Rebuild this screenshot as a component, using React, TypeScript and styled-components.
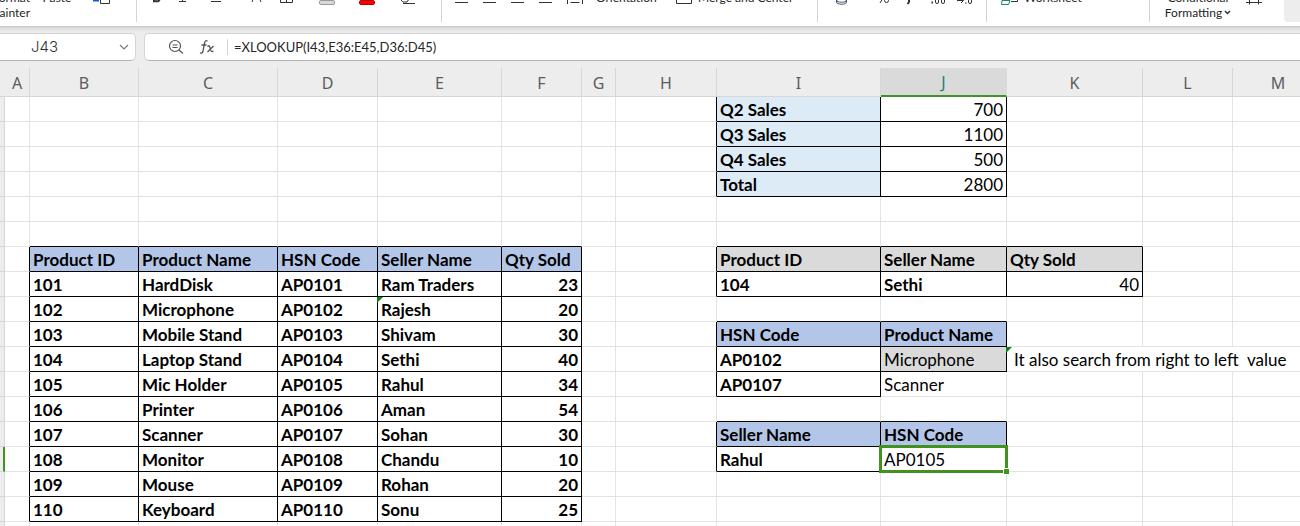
import React from "react";
import styled, { createGlobalStyle, css } from "styled-components";

const GREEN = "#41921f";
const LINE = "#e3e3e3";
const HEAD_LINE = "#d6d6d6";

const Global = createGlobalStyle`
  *, *::after { box-sizing: border-box; }
  body { margin: 0; background: #ededed; overflow: hidden; font-family: "Noto Sans", "Open Sans", sans-serif; }
  button, input { font: inherit; color: inherit; }
`;

const Page = styled.main`
  display: flex;
  flex-direction: column;
  height: 100vh;
  overflow: hidden;
`;

/* ---------- ribbon ---------- */

const Ribbon = styled.header`
  flex: none;
  display: flex;
  height: 26px;
  overflow: hidden;
  background: #fff;
`;

const Shade = styled.div`
  flex: none;
  height: 7px;
  background: linear-gradient(#c6c6c6, #dcdcdc 30%, #e9e9e9 70%, #ededed);
`;

const Group = styled.div<{ $w: number; $pad?: number; $last?: boolean }>`
  flex: ${(p) => (p.$last ? "1 0 auto" : "none")};
  width: ${(p) => p.$w}px;
  height: 22px;
  padding-left: ${(p) => p.$pad ?? 0}px;
  display: flex;
  align-items: flex-start;
  border-right: ${(p) => (p.$last ? "none" : "1px solid #d4d4d4")};
`;

const Tool = styled.button<{ $w: number; $align?: string }>`
  flex: none;
  width: ${(p) => p.$w}px;
  margin-top: -10px;
  padding: 0;
  border: 0;
  background: none;
  color: #262626;
  font-family: Lato, "Noto Sans", sans-serif;
  font-size: 12px;
  line-height: 15px;
  white-space: nowrap;
  text-align: ${(p) => p.$align ?? "left"};
  svg { display: block; }
`;

const ClippedTool = styled(Tool)`
  margin-left: -12px;
`;

const IconLabel = styled.span`
  display: flex;
  gap: 6px;
`;

const Caret = styled.svg`
  && { display: inline-block; }
  margin-left: 2px;
  vertical-align: 2px;
`;

const ActiveBlock = styled.span`
  align-self: stretch;
  width: 40px;
  border-radius: 0 0 0 4px;
  background: #ededed;
`;

/* ---------- formula bar ---------- */

const FormulaRow = styled.form`
  flex: none;
  display: flex;
  gap: 8px;
  height: 28px;
`;

const Field = styled.div<{ $side: "left" | "right" }>`
  display: flex;
  align-items: center;
  height: 28px;
  background: #fff;
  border: 1px solid #d4d4d4;
  border-bottom-color: #b4b4b4;
  ${(p) =>
    p.$side === "left"
      ? css`flex: none; width: 136px; border-left: 0; border-radius: 0 5px 5px 0; padding: 0 4px 0 31px;`
      : css`flex: 1; border-right: 0; border-radius: 5px 0 0 5px; padding-left: 23px;`}
`;

const NameInput = styled.input`
  flex: 1;
  min-width: 0;
  padding: 0;
  border: 0;
  outline: 0;
  background: none;
  color: #333;
  font-family: Inter, sans-serif;
  font-weight: 300;
  font-size: 15px;
  line-height: 20px;
`;

const IconButton = styled.button`
  flex: none;
  padding: 0;
  border: 0;
  background: none;
  color: #555;
  svg { display: block; }
`;

const Tools = styled.div`
  display: flex;
  align-items: center;
  gap: 15px;
  padding-right: 12px;
  border-right: 1px solid #d4d4d4;
`;

const FormulaInput = styled.input`
  flex: 1;
  min-width: 0;
  padding: 0 0 0 6px;
  border: 0;
  outline: 0;
  background: none;
  color: #262626;
  font-family: Lato, "Noto Sans", sans-serif;
  font-size: 13px;
  line-height: 20px;
`;

/* ---------- sheet ---------- */

const Sheet = styled.div`
  flex: 1;
  min-height: 0;
  padding-top: 7px;
  overflow: hidden;
`;

const Grid = styled.table`
  width: 100%;
  min-width: 1324px;
  table-layout: fixed;
  border-collapse: separate;
  border-spacing: 0;
  background: #fff;
`;

const Col = styled.col<{ $w?: number }>`
  width: ${(p) => (p.$w ? `${p.$w}px` : "auto")};
`;

const ColHead = styled.th<{ $active?: boolean; $plain?: boolean }>`
  height: 29px;
  padding: 1px 0 0;
  border-right: 1px solid ${(p) => (p.$active ? "#dadada" : p.$plain ? "#ededed" : HEAD_LINE)};
  border-bottom: ${(p) => (p.$active ? `2px solid ${GREEN}` : `1px solid ${HEAD_LINE}`)};
  background: ${(p) => (p.$active ? "#dadada" : "#ededed")};
  color: ${(p) => (p.$active ? "#217f6d" : "#5c5c5c")};
  font-weight: 400;
  font-size: 16px;
  line-height: 26px;
  text-align: center;
`;

const RowHead = styled.th<{ $active?: boolean }>`
  height: 25px;
  padding: 0;
  background: #ededed;
  border-right: ${(p) => (p.$active ? `2px solid ${GREEN}` : `1px solid ${HEAD_LINE}`)};
  border-bottom: 1px solid ${HEAD_LINE};
`;

type CellProps = {
  $bold?: boolean;
  $right?: boolean;
  $fill?: string;
  $edgeR: string;
  $edgeB: string;
};

const Cell = styled.td<CellProps>`
  position: relative;
  height: 25px;
  padding: 2px 3px 0;
  border-right: 1px solid ${(p) => p.$edgeR};
  border-bottom: 1px solid ${(p) => p.$edgeB};
  background: ${(p) => p.$fill ?? "transparent"};
  color: #000;
  font-family: Lato, "Noto Sans", sans-serif;
  font-size: 17px;
  font-weight: ${(p) => (p.$bold ? 700 : 400)};
  line-height: 22px;
  text-align: ${(p) => (p.$right ? "right" : "left")};
  white-space: pre;
`;

const Note = styled.span`
  padding-left: 4px;
`;

const Flag = styled.span`
  position: absolute;
  top: 0;
  left: -1px;
  border-top: 6px solid #0c8012;
  border-right: 6px solid transparent;
`;

const Selection = styled.span`
  position: absolute;
  z-index: 1;
  inset: -2px;
  border: 3px solid ${GREEN};
  &::after {
    content: "";
    position: absolute;
    right: -4px;
    bottom: -4px;
    width: 6px;
    height: 6px;
    border: solid #fff;
    border-width: 1px 0 0 1px;
    background: ${GREEN};
  }
`;

const COLS: [string, number | undefined][] = [
  ["A", 25], ["B", 109], ["C", 139], ["D", 100], ["E", 124], ["F", 80], ["G", 34],
  ["H", 101], ["I", 164], ["J", 126], ["K", 136], ["L", 90], ["M", undefined],
];

type Data = { text: string; fill?: string; bold?: boolean; right?: boolean; box?: boolean; flag?: boolean; note?: boolean };

const BLUE = "#b4c6e7";
const PALE = "#ddebf7";
const GREY = "#dadada";
const cells: Record<string, Data> = {};

const put = (col: string, row: number, text: string, extra: Partial<Data> = {}) => {
  cells[col + row] = { text, bold: true, box: true, ...extra };
};

[["Q2 Sales", "700"], ["Q3 Sales", "1100"], ["Q4 Sales", "500"], ["Total", "2800"]].forEach(([k, v], i) => {
  put("I", 29 + i, k, { fill: PALE });
  put("J", 29 + i, v, { bold: false, right: true });
});

["Product ID", "Product Name", "HSN Code", "Seller Name", "Qty Sold"].forEach((t, i) => put("BCDEF"[i], 35, t, { fill: BLUE }));
[
  ["HardDisk", "Ram Traders", "23"], ["Microphone", "Rajesh", "20"], ["Mobile Stand", "Shivam", "30"],
  ["Laptop Stand", "Sethi", "40"], ["Mic Holder", "Rahul", "34"], ["Printer", "Aman", "54"],
  ["Scanner", "Sohan", "30"], ["Monitor", "Chandu", "10"], ["Mouse", "Rohan", "20"], ["Keyboard", "Sonu", "25"],
].forEach(([name, seller, qty], i) => {
  const row = 36 + i;
  put("B", row, String(101 + i));
  put("C", row, name);
  put("D", row, `AP0${101 + i}`);
  put("E", row, seller, { flag: row === 37 });
  put("F", row, qty, { right: true });
});

["Product ID", "Seller Name", "Qty Sold"].forEach((t, i) => put("IJK"[i], 35, t, { fill: GREY }));
put("I", 36, "104");
put("J", 36, "Sethi");
put("K", 36, "40", { bold: false, right: true });

put("I", 38, "HSN Code", { fill: BLUE });
put("J", 38, "Product Name", { fill: BLUE });
put("I", 39, "AP0102");
put("J", 39, "Microphone", { bold: false, fill: GREY });
put("K", 39, "It also search from right to left  value", { bold: false, box: false, flag: true, note: true });
put("I", 40, "AP0107");
put("J", 40, "Scanner", { bold: false, box: false });

put("I", 42, "Seller Name", { fill: BLUE });
put("J", 42, "HSN Code", { fill: BLUE });
put("I", 43, "Rahul");
put("J", 43, "AP0105", { bold: false });

const ROWS = Array.from({ length: 18 }, (_, i) => 29 + i);

function SheetCell({ ci, row }: { ci: number; row: number }) {
  const name = COLS[ci][0];
  const c = cells[name + row];
  const next = COLS[ci + 1] && cells[COLS[ci + 1][0] + row];
  const below = cells[name + (row + 1)];
  const spill = row === 39 && ci >= 10;
  return (
    <Cell
      $bold={c?.bold}
      $right={c?.right}
      $fill={c?.fill}
      $edgeR={c?.box || next?.box ? "#000" : spill ? "transparent" : LINE}
      $edgeB={c?.box || below?.box ? "#000" : LINE}
    >
      {c?.note ? <Note>{c.text}</Note> : c?.text}
      {c?.flag && <Flag />}
      {name === "J" && row === 43 && <Selection />}
    </Cell>
  );
}

const Ico = ({ w, children }: { w: number; children: React.ReactNode }) => (
  <svg width={w} height={16} viewBox={`0 0 ${w} 16`} fill="none" stroke="#333" strokeWidth="1">
    {children}
  </svg>
);

export default function App() {
  return (
    <Page>
      <Global />
      <Ribbon>
        <Group $w={137}>
          <ClippedTool $w={42} $align="right">Format<br />Painter</ClippedTool>
          <Tool $w={54} $align="center">Paste</Tool>
          <Tool $w={28} aria-label="Copy">
            <Ico w={28}>
              <path d="M10 4v6.500h5" stroke="#2450e0" strokeWidth="2" />
              <path d="M16.500 3.500h9v10h-9z" />
            </Ico>
          </Tool>
        </Group>
        <Group $w={305} $pad={14}>
          <Tool $w={27} aria-label="Bold">
            <Ico w={12}><path d="M3 2h3.500a2.500 2.500 0 0 1 0 5H3zM3 7h4a2.200 2.200 0 0 1 0 4.200H3z" strokeWidth="2" /></Ico>
          </Tool>
          <Tool $w={33} aria-label="Italic">
            <Ico w={10}><path d="M4 1h5M1 11.500h7M6.500 1l-2 10" /></Ico>
          </Tool>
          <Tool $w={40} aria-label="Underline">
            <Ico w={12}><path d="M2 1v5a3.500 3.500 0 0 0 7 0V1M0 11.500h10" /></Ico>
          </Tool>
          <Tool $w={29} aria-label="Font size">
            <Ico w={12}><path d="M1 12L5.500 1 10 12M3 8h5" /></Ico>
          </Tool>
          <Tool $w={39} aria-label="Borders">
            <Ico w={14}><path d="M.5 .5h12v12H.5zM6.500 .5v12M.5 7.500h12" /></Ico>
          </Tool>
          <Tool $w={40} aria-label="Fill color">
            <Ico w={16}><rect x=".5" y="10.500" width="15" height="4" rx="1.500" fill="#d9d9d9" stroke="#999" /></Ico>
          </Tool>
          <Tool $w={41} aria-label="Font color">
            <Ico w={16}><rect x=".5" y="10.500" width="15" height="4" rx="1.500" fill="#f00" stroke="#b00" /></Ico>
          </Tool>
          <Tool $w={18} aria-label="Clear">
            <Ico w={16}><path d="M1 10l2 2h4l2-3M3 13.500h12" /></Ico>
          </Tool>
        </Group>
        <Group $w={376} $pad={13}>
          {["Top", "Left", "Center", "Right"].map((n) => (
            <Tool key={n} $w={28} aria-label={`Align ${n}`}>
              <Ico w={14}><path d="M0 4.500h13M0 8.500h13M0 12.500h13" /></Ico>
            </Tool>
          ))}
          <Tool $w={29} aria-label="Distribute">
            <Ico w={17}><path d="M.5 3v11M15.500 3v11M3.500 12.500h9M3.500 8.500h9" /></Ico>
          </Tool>
          <Tool $w={80}>Orientation</Tool>
          <Tool $w={120}>
            <IconLabel>
              <Ico w={16}><path d="M.5 2.500h15v11H.5z" /></Ico>Merge and Center
            </IconLabel>
          </Tool>
        </Group>
        <Group $w={169} $pad={18}>
          <Tool $w={42} aria-label="Currency">
            <Ico w={12}><path d="M.5 8v4c0 3 10 3 10 0V8M.5 10c0 3 10 3 10 0" stroke="#44546a" /></Ico>
          </Tool>
          <Tool $w={27} aria-label="Percent">
            <Ico w={12}><path d="M2 13L9 2" /><circle cx="8.500" cy="10.500" r="2" /></Ico>
          </Tool>
          <Tool $w={26} aria-label="Comma">
            <Ico w={8}><path d="M4 9v3l-1.500 2" strokeWidth="2" /></Ico>
          </Tool>
          <Tool $w={26} aria-label="Increase decimal">
            <Ico w={15}><path d="M.5 12.500h1.500" strokeWidth="2" /><rect x="4.500" y="7.500" width="3" height="6" rx="1.500" /><rect x="10.500" y="7.500" width="3" height="6" rx="1.500" /></Ico>
          </Tool>
          <Tool $w={18} aria-label="Decrease decimal">
            <Ico w={16}><path d="M0 10.500h6M4 8l2.500 2.500L4 13M8 13h1.500" /><rect x="11.500" y="7.500" width="3" height="6" rx="1.500" /></Ico>
          </Tool>
        </Group>
        <Group $w={163} $pad={14}>
          <Tool $w={90}>
            <IconLabel>
              <Ico w={17}><path d="M1 10.500h8l-1.500 4H.5z" stroke="#188a5b" /><path d="M10 11.500h6.500V5" /></Ico>Worksheet
            </IconLabel>
          </Tool>
        </Group>
        <Group $w={160} $pad={14} $last>
          <Tool $w={68} $align="center">
            Conditional<br />Formatting
            <Caret width="7" height="5" viewBox="0 0 7 5" fill="none" stroke="#333" strokeWidth="1.500"><path d="M1 1l2.500 2.500L6 1" /></Caret>
          </Tool>
          <Tool $w={52} aria-label="Rows and columns">
            <Ico w={32}><path d="M14 12.500h16M17.500 2v12.500M26.500 2v12.500" /></Ico>
          </Tool>
          <ActiveBlock />
        </Group>
      </Ribbon>
      <Shade />
      <FormulaRow>
        <Field $side="left">
          <NameInput aria-label="Name box" defaultValue="J43" />
          <IconButton type="button" aria-label="Open name list">
            <svg width="14" height="10" viewBox="0 0 14 10" fill="none" stroke="#777" strokeWidth="1.200"><path d="M3 3l4 4 4-4" /></svg>
          </IconButton>
        </Field>
        <Field $side="right">
          <Tools>
            <IconButton type="button" aria-label="Zoom out">
              <svg width="16" height="16" viewBox="0 0 16 16" fill="none" stroke="currentColor" strokeWidth="1.200">
                <circle cx="7" cy="7" r="5.500" /><path d="M11 11l4 3.500M4.500 6h5M4.500 8.500h5" />
              </svg>
            </IconButton>
            <IconButton type="button" aria-label="Insert function">
              <svg width="16" height="16" viewBox="0 0 16 16" fill="none" stroke="currentColor" strokeWidth="1.300">
                <path d="M8.500 2.200C6.800 1 6 2 5.600 4L4 12c-.4 2-1.500 2.500-3 1.800M2.500 6h5M8.500 7.500c1.500-1.500 2.200-.5 2.700 1.800s1.200 4.500 3.300 2.700M14.500 7l-6 6" />
              </svg>
            </IconButton>
          </Tools>
          <FormulaInput aria-label="Formula" defaultValue="=XLOOKUP(I43,E36:E45,D36:D45)" />
        </Field>
      </FormulaRow>
      <Sheet>
        <Grid>
          <colgroup>
            <Col $w={5} />
            {COLS.map(([n, w]) => <Col key={n} $w={w} />)}
          </colgroup>
          <thead>
            <tr>
              <ColHead $plain />
              {COLS.map(([n]) => (
                <ColHead key={n} scope="col" $active={n === "J"}>{n}</ColHead>
              ))}
            </tr>
          </thead>
          <tbody>
            {ROWS.map((row) => (
              <tr key={row}>
                <RowHead scope="row" aria-label={String(row)} $active={row === 43} />
                {COLS.map(([n], ci) => <SheetCell key={n} ci={ci} row={row} />)}
              </tr>
            ))}
          </tbody>
        </Grid>
      </Sheet>
    </Page>
  );
}
